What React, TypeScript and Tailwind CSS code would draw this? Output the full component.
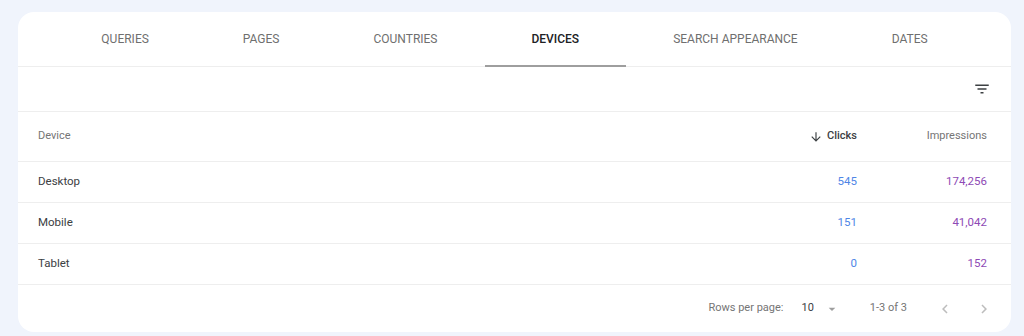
import React from "react";

const tabs = ["QUERIES", "PAGES", "COUNTRIES", "DEVICES", "SEARCH APPEARANCE", "DATES"];

const rows = [
  { device: "Desktop", clicks: "545", impressions: "174,256" },
  { device: "Mobile", clicks: "151", impressions: "41,042" },
  { device: "Tablet", clicks: "0", impressions: "152" },
];

export default function App() {
  return (
    <div
      className="w-[1024px] h-[336px] bg-[#f0f4fc] pt-[12px] pl-[18px]"
      style={{ fontFamily: "Roboto, 'Liberation Sans', sans-serif" }}
    >
      <div className="w-[993px] h-[320px] bg-white rounded-[16px] flex flex-col overflow-hidden">
        {/* tabs */}
        <div className="h-[55px] flex justify-center border-b border-[#eeeeee] shrink-0">
          {tabs.map((t) => {
            const active = t === "DEVICES";
            return (
              <div
                key={t}
                className={
                  active
                    ? "relative px-[47px] flex items-center text-[12px] font-medium text-[#202124]"
                    : "relative px-[47px] flex items-center text-[12px] text-[#6f6f6f]"
                }
              >
                {t}
                {active && <div className="absolute left-0 right-0 -bottom-px h-[2px] bg-[#9e9e9e]" />}
              </div>
            );
          })}
        </div>

        {/* filter row */}
        <div className="h-[45px] flex items-center justify-end pr-[20px] border-b border-[#eeeeee] shrink-0">
          <svg width="18" height="18" viewBox="0 0 24 24" fill="#3c4043">
            <path d="M10 18h4v-2h-4v2zM3 6v2h18V6H3zm3 7h12v-2H6v2z" />
          </svg>
        </div>

        {/* header */}
        <div className="h-[50px] flex items-center pl-[20px] pr-[24px] border-b border-[#eeeeee] text-[11px] shrink-0">
          <div className="flex-1 text-[#757575]">Device</div>
          <div className="w-[100px] flex items-center justify-end gap-[4px] font-medium text-[#3c4043]">
            <svg width="14" height="14" viewBox="0 0 24 24" fill="#3c4043">
              <path d="M20 12l-1.41-1.41L13 16.17V4h-2v12.17l-5.58-5.59L4 12l8 8 8-8z" />
            </svg>
            Clicks
          </div>
          <div className="w-[130px] text-right text-[#757575]">Impressions</div>
        </div>

        {/* rows */}
        {rows.map((r) => (
          <div
            key={r.device}
            className="h-[41px] flex items-center pl-[20px] pr-[24px] border-b border-[#eeeeee] text-[11.5px] shrink-0"
          >
            <div className="flex-1 text-[#3c4043]">{r.device}</div>
            <div className="w-[100px] text-right text-[#4f86e6]">{r.clicks}</div>
            <div className="w-[130px] text-right text-[#8e4ab5]">{r.impressions}</div>
          </div>
        ))}

        {/* footer */}
        <div className="flex-1 flex items-center justify-end pr-[18px] text-[11px] text-[#757575]">
          <span>Rows per page:</span>
          <span className="ml-[18px] text-[#3c4043]">10</span>
          <svg className="ml-[10px]" width="16" height="16" viewBox="0 0 24 24" fill="#9e9e9e">
            <path d="M7 10l5 5 5-5z" />
          </svg>
          <span className="ml-[30px]">1-3 of 3</span>
          <svg className="ml-[29px]" width="18" height="18" viewBox="0 0 24 24" fill="#bdbdbd">
            <path d="M15.41 7.41L14 6l-6 6 6 6 1.41-1.41L10.83 12z" />
          </svg>
          <svg className="ml-[21px]" width="18" height="18" viewBox="0 0 24 24" fill="#bdbdbd">
            <path d="M10 6L8.59 7.41 13.17 12l-4.58 4.59L10 18l6-6z" />
          </svg>
        </div>
      </div>
    </div>
  );
}
